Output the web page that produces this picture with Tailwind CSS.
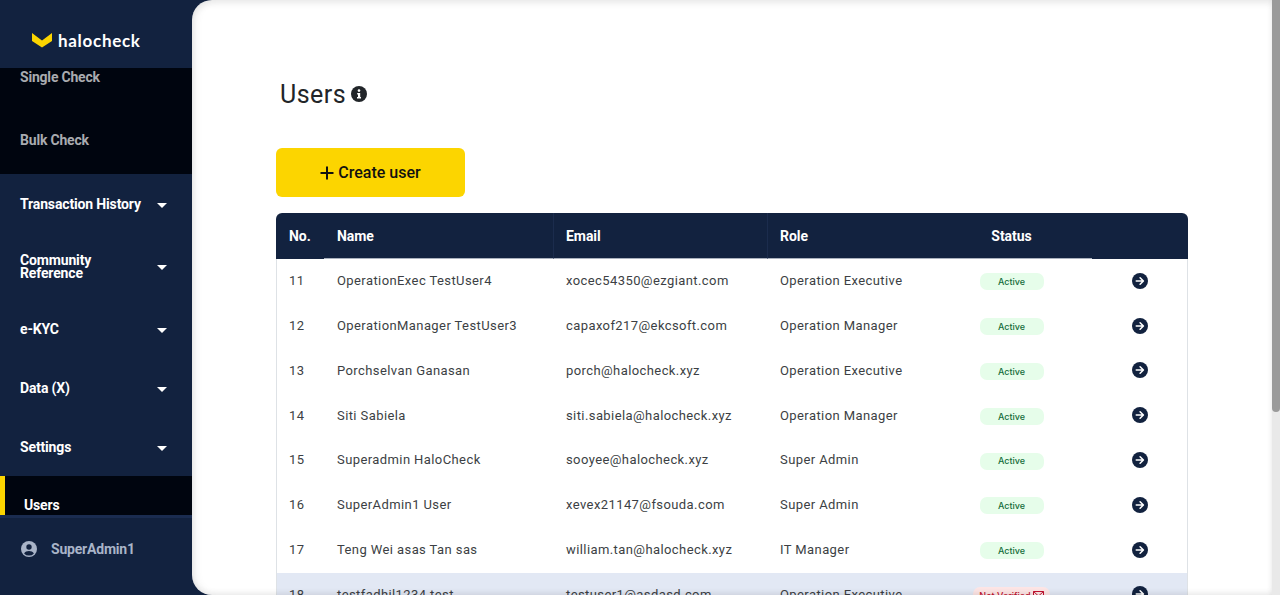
<!doctype html>
<html lang="en">
<head>
<meta charset="utf-8">
<title>Users</title>
<script src="https://cdn.jsdelivr.net/npm/@tailwindcss/browser@4"></script>
</head>
<body class="font-['Roboto',sans-serif] overflow-hidden">
<div class="flex h-[595px] w-[1280px] overflow-hidden bg-[#12223f]">
  <aside class="flex h-full w-[192px] shrink-0 flex-col text-white">
    <div class="flex h-[68px] shrink-0 items-center pl-[32px] pt-[12px]">
      <svg width="20" height="15" viewBox="0 0 20 15" class="mr-[6px]"><path d="M0 0 L10 7.5 L20 0 V8 L10 14.5 L0 8 Z" fill="#fcd500"/></svg>
      <span class="font-['Lato',sans-serif] text-[17px] font-bold tracking-[0.7px] leading-none">halocheck</span>
    </div>
    <div class="flex h-[106px] shrink-0 flex-col bg-[#00050f] pl-[20px] text-[14px] font-bold leading-[18px] tracking-[-0.2px] text-[#a9abb0]">
      <span>Single Check</span>
      <span class="mt-[45px]">Bulk Check</span>
    </div>
    <nav class="flex flex-col text-[14px] font-bold leading-[13px] tracking-[-0.15px]">
      <a class="flex h-[60px] items-center justify-between pl-[20px] pr-[25px]"><span>Transaction History</span><svg width="10" height="5" viewBox="0 0 10 5" class="mt-[2px]"><path d="M0 0H10L5 5Z" fill="#fff"/></svg></a>
      <a class="flex h-[66px] items-center justify-between pl-[20px] pr-[25px]"><span>Community<br>Reference</span><svg width="10" height="5" viewBox="0 0 10 5" class="mt-[1px]"><path d="M0 0H10L5 5Z" fill="#fff"/></svg></a>
      <a class="flex h-[58px] items-center justify-between pl-[20px] pr-[25px]"><span>e-KYC</span><svg width="10" height="5" viewBox="0 0 10 5" class="mt-[2px]"><path d="M0 0H10L5 5Z" fill="#fff"/></svg></a>
      <a class="flex h-[60px] items-center justify-between pl-[20px] pr-[25px]"><span>Data (X)</span><svg width="10" height="5" viewBox="0 0 10 5" class="mt-[2px]"><path d="M0 0H10L5 5Z" fill="#fff"/></svg></a>
      <a class="flex h-[58px] items-center justify-between pl-[20px] pr-[25px]"><span>Settings</span><svg width="10" height="5" viewBox="0 0 10 5" class="mt-[2px]"><path d="M0 0H10L5 5Z" fill="#fff"/></svg></a>
    </nav>
    <div class="flex h-[39px] shrink-0 items-end border-l-[5px] border-[#fcd500] bg-[#00050f] pb-[1px] pl-[19px] text-[14px] font-bold leading-[18px] tracking-[-0.15px]">Users</div>
    <div class="flex flex-1 items-start border-t-[3px] border-[#1a2c50] pl-[21px] pt-[23px] text-[14px] font-bold leading-[16px] tracking-[-0.2px] text-[#a9b4c8]">
      <svg width="16" height="16" viewBox="0 0 16 16" class="mr-[14px]"><circle cx="8" cy="8" r="8" fill="#a9b4c8"/><circle cx="8" cy="6" r="2.7" fill="#12223f"/><path d="M3.1 12.4C4.1 10.8 6 10 8 10s3.9.8 4.9 2.4A6.4 6.4 0 0 1 8 14.6a6.4 6.4 0 0 1-4.9-2.2Z" fill="#12223f"/></svg>
      <span>SuperAdmin1</span>
    </div>
  </aside>

  <main class="relative h-full w-[1080px] shrink-0 overflow-hidden rounded-l-[20px] bg-white pl-[84px]">
    <div class="flex h-[148px] items-start pl-[4px] pt-[80px]">
      <h1 class="text-[25px] font-normal leading-[29px] tracking-[0.45px] text-[#212529]">Users</h1>
      <svg width="16" height="16" viewBox="0 0 16 16" class="ml-[5px] mt-[6px]"><circle cx="8" cy="8" r="8" fill="#212529"/><circle cx="8" cy="4.6" r="1.3" fill="#fff"/><path d="M6.2 7H9.2V11H10V12.5H6V11H7V8.4H6.2Z" fill="#fff"/></svg>
    </div>
    <button class="flex h-[49px] w-[189px] items-center justify-center rounded-[6px] bg-[#fcd500] text-[16px] font-medium text-[#111]">
      <svg width="14" height="14" viewBox="0 0 14 14" class="mr-[4px]"><path d="M7 0.5V13.5M0.5 7H13.5" stroke="#111" stroke-width="2"/></svg>
      Create user
    </button>
    <table class="mt-[16px] w-[912px] table-fixed border-separate border-spacing-0 text-left text-[13px] tracking-[0.41px] text-[#3c3f44]">
      <colgroup><col class="w-[48px]"><col class="w-[229px]"><col class="w-[214px]"><col class="w-[163px]"><col class="w-[162px]"><col class="w-[96px]"></colgroup>
      <thead>
        <tr class="h-[46px] bg-[#12223f] text-[14px] font-bold tracking-[-0.05px] text-white">
          <th class="rounded-tl-[6px] pl-[13px]">No.</th>
          <th class="border-b border-[#aab1be] pl-[13px] pt-[1px]">Name</th>
          <th class="border-b border-l border-b-[#aab1be] border-l-[#1b2c4d] pl-[12px] pt-[1px]">Email</th>
          <th class="border-b border-l border-b-[#aab1be] border-l-[#1b2c4d] pl-[12px] pt-[1px]">Role</th>
          <th class="border-b border-[#aab1be] pl-[1px] pt-[1px] text-center">Status</th>
          <th class="rounded-tr-[6px]"></th>
        </tr>
      </thead>
      <tbody>
        <tr class="h-[44.8px]"><td class="border-l border-[#dee2e6] pb-[1px] pl-[12px]">11</td><td class="pb-[1px] pl-[13px]">OperationExec TestUser4</td><td class="pb-[1px] pl-[13px]">xocec54350@ezgiant.com</td><td class="pb-[1px] pl-[13px]">Operation Executive</td><td class="pl-[1px] pt-[1px]"><div class="mx-auto flex h-[17px] w-[64px] items-center justify-center rounded-[7px] bg-[#e6fdea] font-['Inter',sans-serif] text-[9px] font-medium tracking-normal text-[#146c3b]">Active</div></td><td class="border-r border-[#dee2e6] pb-[1px]"><svg width="16" height="16" viewBox="0 0 16 16" class="mx-auto"><circle cx="8" cy="8" r="8" fill="#12223f"/><path d="M4.3 8H11.2M8.1 4.8L11.4 8L8.1 11.2" stroke="#fff" stroke-width="1.6" fill="none" stroke-linecap="round" stroke-linejoin="round"/></svg></td></tr>
        <tr class="h-[44.8px]"><td class="border-l border-[#dee2e6] pb-[1px] pl-[12px]">12</td><td class="pb-[1px] pl-[13px]">OperationManager TestUser3</td><td class="pb-[1px] pl-[13px]">capaxof217@ekcsoft.com</td><td class="pb-[1px] pl-[13px]">Operation Manager</td><td class="pl-[1px] pt-[1px]"><div class="mx-auto flex h-[17px] w-[64px] items-center justify-center rounded-[7px] bg-[#e6fdea] font-['Inter',sans-serif] text-[9px] font-medium tracking-normal text-[#146c3b]">Active</div></td><td class="border-r border-[#dee2e6] pb-[1px]"><svg width="16" height="16" viewBox="0 0 16 16" class="mx-auto"><circle cx="8" cy="8" r="8" fill="#12223f"/><path d="M4.3 8H11.2M8.1 4.8L11.4 8L8.1 11.2" stroke="#fff" stroke-width="1.6" fill="none" stroke-linecap="round" stroke-linejoin="round"/></svg></td></tr>
        <tr class="h-[44.8px]"><td class="border-l border-[#dee2e6] pb-[1px] pl-[12px]">13</td><td class="pb-[1px] pl-[13px]">Porchselvan Ganasan</td><td class="pb-[1px] pl-[13px]">porch@halocheck.xyz</td><td class="pb-[1px] pl-[13px]">Operation Executive</td><td class="pl-[1px] pt-[1px]"><div class="mx-auto flex h-[17px] w-[64px] items-center justify-center rounded-[7px] bg-[#e6fdea] font-['Inter',sans-serif] text-[9px] font-medium tracking-normal text-[#146c3b]">Active</div></td><td class="border-r border-[#dee2e6] pb-[1px]"><svg width="16" height="16" viewBox="0 0 16 16" class="mx-auto"><circle cx="8" cy="8" r="8" fill="#12223f"/><path d="M4.3 8H11.2M8.1 4.8L11.4 8L8.1 11.2" stroke="#fff" stroke-width="1.6" fill="none" stroke-linecap="round" stroke-linejoin="round"/></svg></td></tr>
        <tr class="h-[44.8px]"><td class="border-l border-[#dee2e6] pb-[1px] pl-[12px]">14</td><td class="pb-[1px] pl-[13px]">Siti Sabiela</td><td class="pb-[1px] pl-[13px]">siti.sabiela@halocheck.xyz</td><td class="pb-[1px] pl-[13px]">Operation Manager</td><td class="pl-[1px] pt-[1px]"><div class="mx-auto flex h-[17px] w-[64px] items-center justify-center rounded-[7px] bg-[#e6fdea] font-['Inter',sans-serif] text-[9px] font-medium tracking-normal text-[#146c3b]">Active</div></td><td class="border-r border-[#dee2e6] pb-[1px]"><svg width="16" height="16" viewBox="0 0 16 16" class="mx-auto"><circle cx="8" cy="8" r="8" fill="#12223f"/><path d="M4.3 8H11.2M8.1 4.8L11.4 8L8.1 11.2" stroke="#fff" stroke-width="1.6" fill="none" stroke-linecap="round" stroke-linejoin="round"/></svg></td></tr>
        <tr class="h-[44.8px]"><td class="border-l border-[#dee2e6] pb-[1px] pl-[12px]">15</td><td class="pb-[1px] pl-[13px]">Superadmin HaloCheck</td><td class="pb-[1px] pl-[13px]">sooyee@halocheck.xyz</td><td class="pb-[1px] pl-[13px]">Super Admin</td><td class="pl-[1px] pt-[1px]"><div class="mx-auto flex h-[17px] w-[64px] items-center justify-center rounded-[7px] bg-[#e6fdea] font-['Inter',sans-serif] text-[9px] font-medium tracking-normal text-[#146c3b]">Active</div></td><td class="border-r border-[#dee2e6] pb-[1px]"><svg width="16" height="16" viewBox="0 0 16 16" class="mx-auto"><circle cx="8" cy="8" r="8" fill="#12223f"/><path d="M4.3 8H11.2M8.1 4.8L11.4 8L8.1 11.2" stroke="#fff" stroke-width="1.6" fill="none" stroke-linecap="round" stroke-linejoin="round"/></svg></td></tr>
        <tr class="h-[44.8px]"><td class="border-l border-[#dee2e6] pb-[1px] pl-[12px]">16</td><td class="pb-[1px] pl-[13px]">SuperAdmin1 User</td><td class="pb-[1px] pl-[13px]">xevex21147@fsouda.com</td><td class="pb-[1px] pl-[13px]">Super Admin</td><td class="pl-[1px] pt-[1px]"><div class="mx-auto flex h-[17px] w-[64px] items-center justify-center rounded-[7px] bg-[#e6fdea] font-['Inter',sans-serif] text-[9px] font-medium tracking-normal text-[#146c3b]">Active</div></td><td class="border-r border-[#dee2e6] pb-[1px]"><svg width="16" height="16" viewBox="0 0 16 16" class="mx-auto"><circle cx="8" cy="8" r="8" fill="#12223f"/><path d="M4.3 8H11.2M8.1 4.8L11.4 8L8.1 11.2" stroke="#fff" stroke-width="1.6" fill="none" stroke-linecap="round" stroke-linejoin="round"/></svg></td></tr>
        <tr class="h-[44.8px]"><td class="border-l border-[#dee2e6] pb-[1px] pl-[12px]">17</td><td class="pb-[1px] pl-[13px]">Teng Wei asas Tan sas</td><td class="pb-[1px] pl-[13px]">william.tan@halocheck.xyz</td><td class="pb-[1px] pl-[13px]">IT Manager</td><td class="pl-[1px] pt-[1px]"><div class="mx-auto flex h-[17px] w-[64px] items-center justify-center rounded-[7px] bg-[#e6fdea] font-['Inter',sans-serif] text-[9px] font-medium tracking-normal text-[#146c3b]">Active</div></td><td class="border-r border-[#dee2e6] pb-[1px]"><svg width="16" height="16" viewBox="0 0 16 16" class="mx-auto"><circle cx="8" cy="8" r="8" fill="#12223f"/><path d="M4.3 8H11.2M8.1 4.8L11.4 8L8.1 11.2" stroke="#fff" stroke-width="1.6" fill="none" stroke-linecap="round" stroke-linejoin="round"/></svg></td></tr>
        <tr class="h-[44.8px] bg-[#e2e8f4]"><td class="border-l border-[#dee2e6] pb-[1px] pl-[12px]">18</td><td class="pb-[1px] pl-[13px]">testfadhil1234 test</td><td class="pb-[1px] pl-[13px]">testuser1@asdasd.com</td><td class="pb-[1px] pl-[13px]">Operation Executive</td><td class="pl-[1px] pt-[1px]"><div class="mx-auto flex h-[17px] w-[77px] items-center justify-center gap-[2px] rounded-[7px] bg-[#fde5e5] font-['Inter',sans-serif] text-[9px] font-medium tracking-normal text-[#c1122f]">Not Verified<svg width="11" height="9" viewBox="0 0 11 9"><path d="M0.5 0.5H10.5V8.5H0.5ZM0.5 0.5L5.5 5L10.5 0.5" fill="none" stroke="#c1122f"/></svg></div></td><td class="border-r border-[#dee2e6] pb-[1px]"><svg width="16" height="16" viewBox="0 0 16 16" class="mx-auto"><circle cx="8" cy="8" r="8" fill="#12223f"/><path d="M4.3 8H11.2M8.1 4.8L11.4 8L8.1 11.2" stroke="#fff" stroke-width="1.6" fill="none" stroke-linecap="round" stroke-linejoin="round"/></svg></td></tr>
      </tbody>
    </table>
    <div class="pointer-events-none absolute inset-0 rounded-l-[20px] shadow-[inset_4px_0_8px_rgba(0,0,0,0.05),inset_0_4px_6px_rgba(0,0,0,0.06),inset_0_-3px_5px_rgba(0,0,0,0.05)]"></div>
  </main>

  <div class="h-full w-[8px] shrink-0 bg-[#e9e9e9]">
    <div class="h-[412px] rounded-b-[4px] bg-[#9a9a9a]"></div>
  </div>
</div>
</body>
</html>
